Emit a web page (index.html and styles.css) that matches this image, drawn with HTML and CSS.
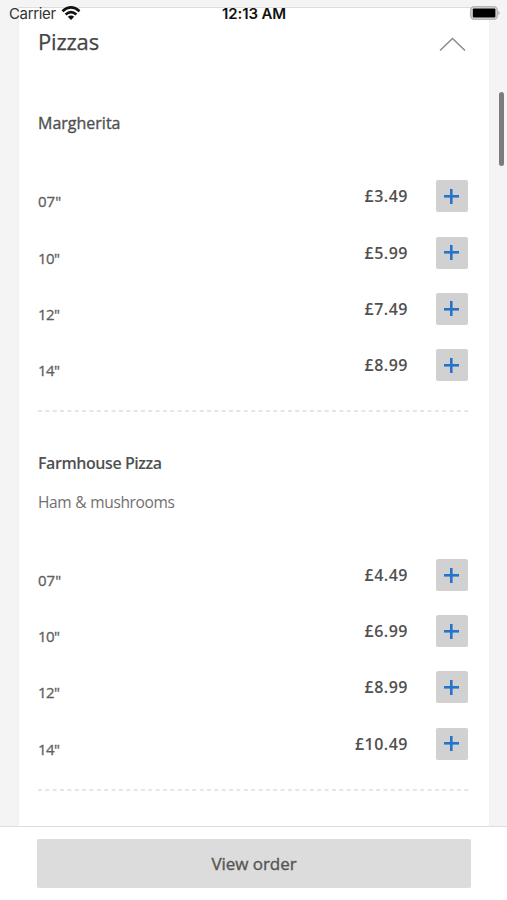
FILE: index.html
```html
<!DOCTYPE html>
<html lang="en">
<head>
<meta charset="utf-8">
<title>Menu</title>
<link rel="stylesheet" href="styles.css">
</head>
<body>
<div class="status">
  <span class="carrier">Carrier</span>
  <svg class="wifi" width="20" height="15" viewBox="0 0 20 15" fill="none" stroke="#111" stroke-width="2.5"><path d="M1.5 5.2Q10-2.4 18.5 5.2M4.6 8.5Q10 3.8 15.4 8.5"/><path d="M6.8 10.7Q10 8.1 13.2 10.7L10 14Z" fill="#111" stroke="none"/></svg>
  <span class="time">12:13 AM</span>
  <svg class="battery" width="32" height="16" viewBox="0 0 32 16"><rect x="1.7" y="1.7" width="26.6" height="12.6" rx="3.5" fill="#ddd" stroke="#b5b5b5" stroke-width="1.5"/><rect x="3.8" y="3.6" width="22.6" height="8.8" rx="1"/><path d="M29.3 5.7Q32 8 29.3 10.3Z" fill="#aaa"/></svg>
</div>
<main class="screen">
  <section class="card">
    <header class="category">
      <h1>Pizzas</h1>
      <svg width="28" height="16" viewBox="0 0 28 16" fill="none" stroke="#8a8a8a" stroke-width="1.5"><path d="M1 14.5L13.5 2.5L26 14.5"/></svg>
    </header>
    <article class="item plain">
      <h2 class="margherita">Margherita</h2>
      <ul>
        <li><span class="size">07"</span><span class="price">£3.49</span><button class="add" aria-label="Add"></button></li>
        <li><span class="size narrow">10"</span><span class="price">£5.99</span><button class="add" aria-label="Add"></button></li>
        <li><span class="size narrow">12"</span><span class="price">£7.49</span><button class="add" aria-label="Add"></button></li>
        <li><span class="size narrow">14"</span><span class="price">£8.99</span><button class="add" aria-label="Add"></button></li>
      </ul>
      <svg class="rule" width="432" height="2"><path d="M0 1H432"/></svg>
    </article>
    <article class="item described">
      <h2 class="farmhouse">Farmhouse Pizza</h2>
      <p>Ham &amp; mushrooms</p>
      <ul>
        <li><span class="size">07"</span><span class="price">£4.49</span><button class="add" aria-label="Add"></button></li>
        <li><span class="size narrow">10"</span><span class="price">£6.99</span><button class="add" aria-label="Add"></button></li>
        <li><span class="size narrow">12"</span><span class="price">£8.99</span><button class="add" aria-label="Add"></button></li>
        <li><span class="size narrow">14"</span><span class="price">£10.49</span><button class="add" aria-label="Add"></button></li>
      </ul>
      <svg class="rule" width="432" height="2"><path d="M0 1H432"/></svg>
    </article>
  </section>
</main>
<footer class="footer"><button class="order">View order</button></footer>
<div class="scrollbar"></div>
</body>
</html>
```
FILE: styles.css
```css
* { box-sizing: border-box; margin: 0; padding: 0; }
body { width: 507px; height: 900px; overflow: hidden; position: relative; display: flex; flex-direction: column; background: #fff; font-family: "Open Sans", "Noto Sans", sans-serif; color: #505050; }
.status { position: absolute; z-index: 2; top: 0; left: 0; width: 507px; height: 28px; display: grid; grid-template-columns: 52px 161px 84px 1fr 32px; align-items: center; padding: 0 5px 1px 9px; font: 15px/26px Inter, "Liberation Sans", sans-serif; color: #111; white-space: nowrap; }
.carrier { color: #333; letter-spacing: -.35px; }
.wifi { position: relative; left: 0; top: 0; }
.time { font-weight: 600; letter-spacing: -.1px; }
.battery { grid-column: 5; position: relative; left: -1px; top: -1px; }
.screen { height: 826px; flex: none; background: #f4f4f4; padding: 7px 17px 0 18px; }
.card { height: 819px; background: #fff; border: 1px solid #f0f0f0; border-top-color: #ddd; border-bottom: 0; padding: 0 19px; }
.category { height: 70px; display: flex; justify-content: space-between; align-items: flex-start; padding: 28px 3px 0 0; }
h1 { font-size: 22px; line-height: 30px; font-weight: 400; color: #444; margin-top: -10px; letter-spacing: -.2px; -webkit-text-stroke: .25px; }
.item { display: flex; flex-direction: column; }
h2 { font-size: 16px; line-height: 24px; font-weight: 500; white-space: nowrap; }
.plain { padding-top: 33px; height: 334px; }
.plain ul { margin-top: 33.4px; }
.margherita { letter-spacing: 0; -webkit-text-stroke: .35px; }
.farmhouse { font-weight: 600; letter-spacing: -.43px; }
.described { padding-top: 39px; height: 379px; }
.described p { margin-top: 15px; font-size: 15.5px; line-height: 24px; color: #707070; letter-spacing: -.37px; word-spacing: .4px; }
.described ul { margin-top: 33px; }
ul { list-style: none; }
li { height: 56.2px; display: grid; grid-template-columns: 1fr 90px 62px; align-items: center; }
.size { font-size: 15px; line-height: 20px; padding-top: 10px; color: #606060; letter-spacing: 0; -webkit-text-stroke: .3px; }
.narrow { letter-spacing: -.6px; }
.price { text-align: right; font-size: 16px; font-weight: 600; letter-spacing: .5px; }
.add { justify-self: end; margin-right: 2.5px; width: 32px; height: 32px; border: 0; border-radius: 2px; background: linear-gradient(#2673ca, #2673ca) center / 15px 2.6px no-repeat, linear-gradient(#2673ca, #2673ca) center / 2.6px 15px no-repeat, #d1d1d1; }
.rule { display: block; margin-top: 16.6px; fill: none; stroke: #dedede; stroke-width: 1.4; stroke-dasharray: 4 3.35; }
.described .rule { margin-top: 17px; }
.footer { height: 74px; flex: none; border-top: 1px solid #ddd; padding: 12px 36px 0 37px; background: #fff; }
.order { display: block; width: 434px; height: 49px; border: 0; border-radius: 2px; background: #dcdcdc; color: #555; font: 400 17px/49px "Open Sans", sans-serif; letter-spacing: -.05px; -webkit-text-stroke: .35px; }
.scrollbar { position: absolute; z-index: 3; left: 499px; top: 92px; width: 5px; height: 74px; border-radius: 3px; background: #7c7c7c; }
```
